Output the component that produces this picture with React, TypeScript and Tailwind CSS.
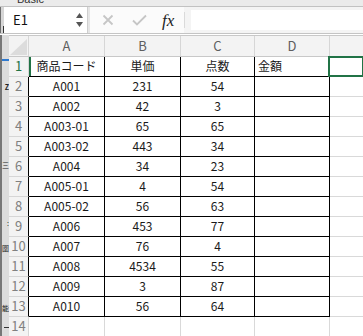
import * as React from 'react';

const rows: string[][] = [
    ['商品コード', '単価', '点数', '金額'],
    ['A001', '231', '54', ''],
    ['A002', '42', '3', ''],
    ['A003-01', '65', '65', ''],
    ['A003-02', '443', '34', ''],
    ['A004', '34', '23', ''],
    ['A005-01', '4', '54', ''],
    ['A005-02', '56', '63', ''],
    ['A006', '453', '77', ''],
    ['A007', '76', '4', ''],
    ['A008', '4534', '55', ''],
    ['A009', '3', '87', ''],
    ['A010', '56', '64', ''],
];

const colW = ['w-[76px]', 'w-[76px]', 'w-[74px]', 'w-[75px]'];
const letters = ['A', 'B', 'C', 'D'];

function FormulaBar() {
    return (
        <div className="h-[27px] flex border-b border-[#c4c4c4] bg-[#f4f4f4]">
            <div className="w-[4px] shrink-0 bg-[#d6d6d6] border-l border-[#6e6e6e] flex flex-col">
                <div className="h-[20px]" />
                <div className="ml-[2px] w-px h-[7px] bg-[#333]" />
            </div>
            <div className="w-[84px] shrink-0 bg-white border-r border-[#cfcfcf] flex items-center pl-[9px] pr-[3px]">
                <span className="flex-1 text-[13px] text-[#111]">E1</span>
                <svg width="9" height="16" viewBox="0 0 9 16">
                    <path d="M4.5 1 L8 6 L1 6 Z" fill="#555" />
                    <path d="M4.5 15 L8 10 L1 10 Z" fill="#555" />
                </svg>
            </div>
            <div className="w-[2px] shrink-0 bg-[#e6e6e6]" />
            <div className="w-[94px] shrink-0 bg-[#fbfbfb] flex items-center">
                <svg width="12" height="12" viewBox="0 0 12 12" className="ml-[12px]">
                    <path d="M1.5 1.5 L10.5 10.5 M10.5 1.5 L1.5 10.5" stroke="#c6c6c6" strokeWidth="1.8" />
                </svg>
                <svg width="15" height="12" viewBox="0 0 15 12" className="ml-[18px]">
                    <path d="M1 6.5 L5 10.5 L14 1.5" stroke="#c6c6c6" strokeWidth="1.8" fill="none" />
                </svg>
                <span className="ml-[15px] text-[17px] italic text-[#222] font-['Liberation_Serif',serif] leading-none">fx</span>
            </div>
            <div className="w-px shrink-0 my-[5px] bg-[#dadada]" />
            <div className="w-[6px] shrink-0" />
            <div className="flex-1 my-[3px] bg-white" />
        </div>
    );
}

// window behind, only a sliver of it shows
function LeftStrip() {
    return (
        <div className="w-[9px] shrink-0 bg-[#dcdcdc] border-l-2 border-[#777] flex flex-col items-end overflow-hidden text-[7px] leading-none text-[#222]">
            <div className="h-[24px]" />
            <div className="h-[2px] w-[7px] bg-[#2f7ad0]" />
            <div className="h-[23px]" />
            <div className="h-[8px] font-bold">Z</div>
            <div className="h-[70px]" />
            <div className="h-[8px]">三</div>
            <div className="h-[50px]" />
            <div className="h-[8px]">:</div>
            <div className="h-[17px]" />
            <div className="h-[8px]">圍</div>
            <div className="h-[52px]" />
            <div className="h-[8px]">能</div>
            <div className="h-[14px]" />
            <div className="h-px w-[5px] bg-[#333]" />
        </div>
    );
}

function HeaderRow() {
    return (
        <div className="h-[22px] flex border-t border-b border-[#c8c8c8] bg-[#f3f3f3] text-[13px] text-[#5e5e5e]">
            <div className="w-[20px] shrink-0 border-r border-[#d6d6d6] flex items-end justify-end pr-[1px] pb-[1px]">
                <svg width="17" height="16" viewBox="0 0 17 16">
                    <path d="M17 0 L17 16 L0 16 Z" fill="#dcdcdc" />
                </svg>
            </div>
            {letters.map((l, i) => (
                <div key={l} className={`${colW[i]} shrink-0 border-r border-[#d6d6d6] flex items-center justify-center`}>
                    {l}
                </div>
            ))}
            <div className="flex-1" />
        </div>
    );
}

function DataRow({cells, n}: {cells: string[]; n: number}) {
    const first = n === 1;
    return (
        <div className="h-[20px] flex text-[12px] text-[#1a1a1a]">
            <div
                className={`w-[20px] shrink-0 bg-[#f3f3f3] border-b border-[#d6d6d6] border-r flex items-center justify-center text-[13px] ${first ? 'text-[#217346] border-r-[#d6d6d6]' : 'text-[#808080] border-r-black'}`}
            >
                {n}
            </div>
            {cells.map((c, i) => (
                <div
                    key={i}
                    className={`${colW[i]} shrink-0 border-r border-b border-black flex items-center ${first && i === 3 ? 'justify-start pl-[3px]' : 'justify-center'} ${first && i === 0 ? 'shadow-[inset_2px_0_0_#217346]' : ''}`}
                >
                    {c}
                </div>
            ))}
            <div className="flex-1 relative border-b border-[#d9d9d9]">
                {first && <div className="absolute -left-[2px] -top-px -right-px -bottom-px border-2 border-[#217346]" />}
            </div>
        </div>
    );
}

function EmptyRow({n}: {n: number}) {
    return (
        <div className="h-[20px] flex">
            <div className="w-[20px] shrink-0 bg-[#f3f3f3] border-b border-r border-[#d6d6d6] flex items-center justify-center text-[13px] text-[#808080]">
                {n}
            </div>
            {colW.map((w, i) => (
                <div key={i} className={`${w} shrink-0 border-r border-b border-[#d9d9d9]`} />
            ))}
            <div className="flex-1 border-b border-[#d9d9d9]" />
        </div>
    );
}

export default function App() {
    return (
        <div className="w-[363px] h-[336px] overflow-hidden bg-white flex flex-col font-['Noto_Sans_CJK_JP',sans-serif]">
            <div className="h-[7px] shrink-0 bg-[#ebebeb] border-b border-[#c2c2c2] overflow-hidden flex text-[11px] text-[#333] leading-none">
                <span className="ml-[17px] -mt-[6px] font-['Liberation_Sans',sans-serif]">Basic</span>
            </div>
            <FormulaBar />
            <div className="h-px shrink-0 bg-white" />
            <div className="flex-1 flex overflow-hidden">
                <LeftStrip />
                <div className="flex-1 flex flex-col">
                    <HeaderRow />
                    {rows.map((r, i) => (
                        <DataRow key={i} cells={r} n={i + 1} />
                    ))}
                    <EmptyRow n={14} />
                </div>
            </div>
        </div>
    );
}
